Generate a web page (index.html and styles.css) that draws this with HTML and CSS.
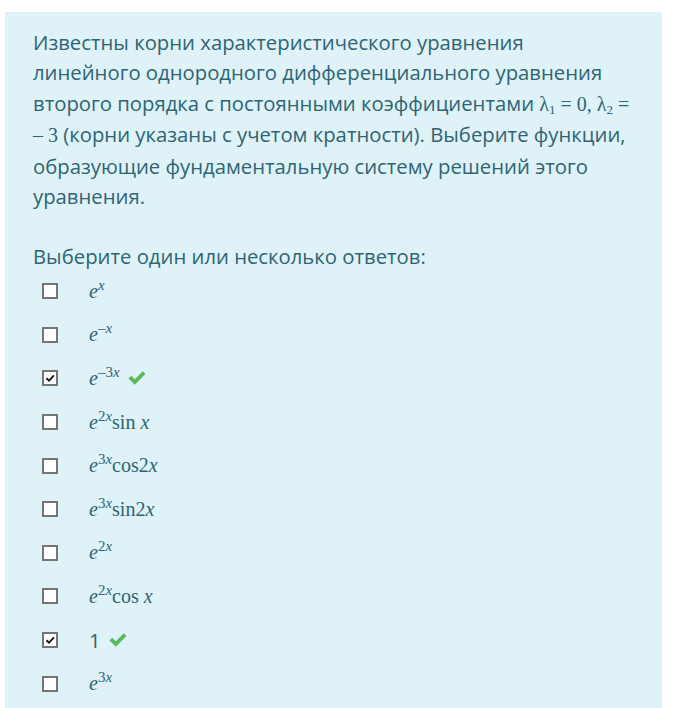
FILE: index.html
```html
<!DOCTYPE html>
<html lang="ru">
<head>
<meta charset="utf-8">
<link rel="stylesheet" href="styles.css">
</head>
<body>
<div class="formulation">
  <p class="qtext">Известны корни характеристического уравнения линейного однородного дифференциального уравнения второго порядка с постоянными коэффициентами <span class="m">λ<sub>1</sub> = 0, λ<sub>2</sub>&nbsp;= –&nbsp;3</span> (корни указаны с учетом кратности). Выберите функции, образующие фундаментальную систему решений этого уравнения.</p>
  <div class="prompt">Выберите один или несколько ответов:</div>
  <div class="answers">
    <div class="opt"><span class="cb"></span><span class="m"><i>e</i><sup><i>x</i></sup></span></div>
    <div class="opt"><span class="cb"></span><span class="m"><i>e</i><sup>–<i>x</i></sup></span></div>
    <div class="opt"><span class="cb checked"><svg viewBox="0 0 10 10"><path d="M2 5.2 L4.2 7.3 L8.2 2.8" /></svg></span><span class="m"><i>e</i><sup>–3<i>x</i></sup></span><svg class="ok" viewBox="0 0 20 16"><path d="M1.5 8.5 L4.2 5.8 L7.8 9.3 L15.8 1.3 L18.5 4 L7.8 14.7 Z"/></svg></div>
    <div class="opt"><span class="cb"></span><span class="m"><i>e</i><sup>2<i>x</i></sup>sin <i>x</i></span></div>
    <div class="opt"><span class="cb"></span><span class="m"><i>e</i><sup>3<i>x</i></sup>cos2<i>x</i></span></div>
    <div class="opt"><span class="cb"></span><span class="m"><i>e</i><sup>3<i>x</i></sup>sin2<i>x</i></span></div>
    <div class="opt"><span class="cb"></span><span class="m"><i>e</i><sup>2<i>x</i></sup></span></div>
    <div class="opt"><span class="cb"></span><span class="m"><i>e</i><sup>2<i>x</i></sup>cos <i>x</i></span></div>
    <div class="opt"><span class="cb checked"><svg viewBox="0 0 10 10"><path d="M2 5.2 L4.2 7.3 L8.2 2.8" /></svg></span><span class="plain">1</span><svg class="ok" viewBox="0 0 20 16"><path d="M1.5 8.5 L4.2 5.8 L7.8 9.3 L15.8 1.3 L18.5 4 L7.8 14.7 Z"/></svg></div>
    <div class="opt"><span class="cb"></span><span class="m"><i>e</i><sup>3<i>x</i></sup></span></div>
  </div>
</div>
</body>
</html>
```
FILE: styles.css
```css
html, body {
  margin: 0;
  padding: 0;
  background: #ffffff;
}
body {
  font-family: "Open Sans", "Noto Sans", sans-serif;
  color: #2f6473;
}
.formulation {
  margin: 12px 20px 0 5px;
  background: #def2f8;
  padding: 15px 26px 6px 28px;
  min-height: 696px;
  box-sizing: border-box;
}
.qtext {
  margin: 0 0 30px 0;
  font-size: 20.3px;
  line-height: 30.4px;
}
.m {
  font-family: "Liberation Serif", "Times New Roman", serif;
  font-size: 20px;
}
.qtext .m {
  font-size: 20px;
}
sub {
  font-size: 13px;
  vertical-align: -3px;
  line-height: 0;
}
sup {
  font-size: 15px;
  vertical-align: 8px;
  line-height: 0;
}
.prompt {
  font-size: 20.3px;
  line-height: 30px;
}
.answers {
  display: flex;
  flex-direction: column;
  margin-top: -2px;
}
.opt {
  display: flex;
  align-items: center;
  height: 43.6px;
  padding-left: 9px;
}
.cb {
  width: 12px;
  height: 12px;
  border: 2px solid #757575;
  background: #fff;
  margin-right: 31px;
  flex: none;
  display: flex;
  align-items: center;
  justify-content: center;
}
.cb svg {
  width: 12px;
  height: 12px;
  fill: none;
  stroke: #111;
  stroke-width: 1.5;
}
.m i {
  font-style: italic;
}
.plain {
  font-size: 20.3px;
}
.ok {
  width: 20px;
  height: 16px;
  margin-left: 7px;
  fill: #5cb85c;
}
```
